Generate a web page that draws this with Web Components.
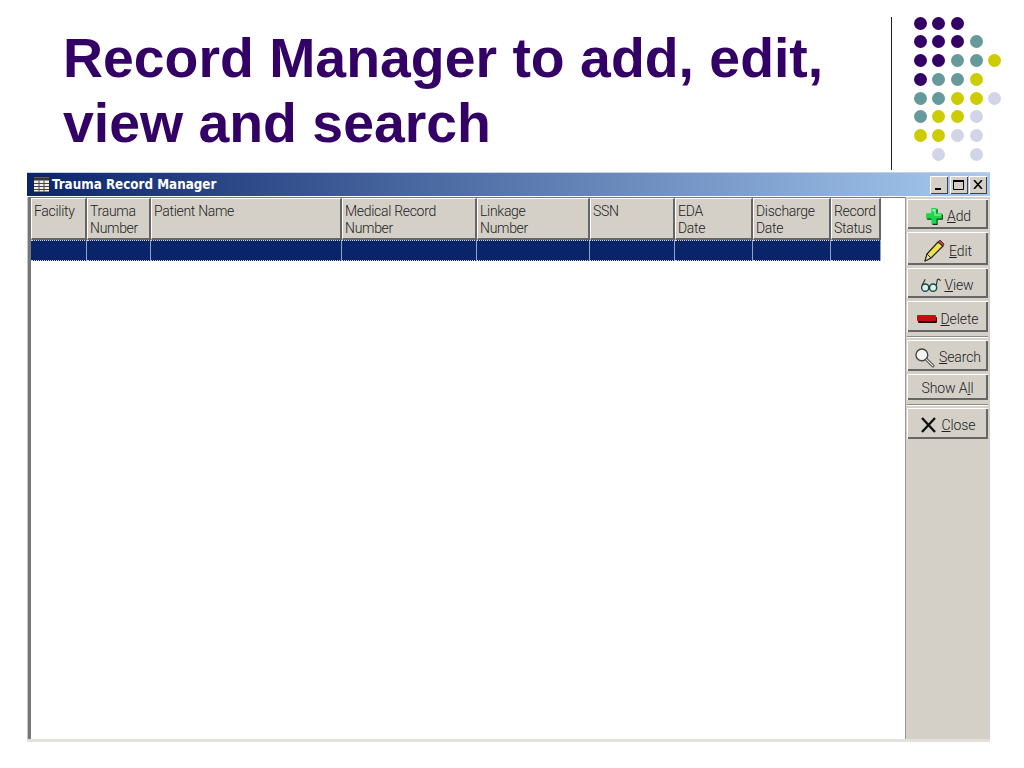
<!DOCTYPE html>
<html>
<head>
<meta charset="utf-8">
<title>Record Manager</title>
<style>
  html, body { margin: 0; background: #fff; }
  body { width: 1024px; height: 768px; overflow: hidden; font-family: "Liberation Sans", Arial, sans-serif; }
  svg { display: block; }
</style>
</head>
<body>
<slide-page>
  <slide-header slot="header">Record Manager to add, edit,<br>view and search</slide-header>
  <app-window caption="Trauma Record Manager">
    <record-grid></record-grid>
    <tool-bar slot="side">
      <tool-button h="30" gap="2" pt="4">
        <svg slot="icon" width="21" height="21" viewBox="0 0 20 20"><path d="M8 3h5v5h5v5h-5v5H8v-5H3V8h5z" fill="#0a3a12"/><path d="M7 2h5v5h5v5h-5v5H7v-5H2V7h5z" fill="#16d848"/><path d="M8 3h3v5h5v1h-6V5H8z" fill="#a8f8b8"/></svg>
        <span><u>A</u>dd</span>
      </tool-button>
      <tool-button h="33" gap="4" pt="4">
        <svg slot="icon" width="22" height="24" viewBox="0 0 22 24"><path d="M2 22l2-7L15 3l5 4L8 19z" fill="#f2e24a" stroke="#222" stroke-width="1.2" stroke-linejoin="round"/><path d="M15 3l2-2 4 4-1 2z" fill="#d83a3a" stroke="#222" stroke-width=".8"/><path d="M2 22l2-7 4 4z" fill="#e8d8b0" stroke="#222" stroke-width="1"/></svg>
        <span><u>E</u>dit</span>
      </tool-button>
      <tool-button h="30" gap="3" pt="4">
        <svg slot="icon" width="20" height="16" viewBox="0 0 19 15"><circle cx="4" cy="10" r="3.4" fill="#d8f0ee" stroke="#1d4a44" stroke-width="1.4"/><circle cx="11.5" cy="10" r="3.4" fill="#d8f0ee" stroke="#1d4a44" stroke-width="1.4"/><path d="M7.300 9q.5-1 .900 0M1 8L4 2M14.500 8L15.500 2.500q1.500-1.500 3 1" fill="none" stroke="#333" stroke-width="1.100"/></svg>
        <span><u>V</u>iew</span>
      </tool-button>
      <tool-button h="31" gap="4" pt="4">
        <svg slot="icon" width="20" height="8" viewBox="0 0 20 8"><rect x="1" y="2" width="19" height="6" rx="1" fill="#2b0606"/><rect y="0" width="19" height="6" rx="1" fill="#c80c10"/></svg>
        <span><u>D</u>elete</span>
      </tool-button>
      <tool-sep></tool-sep>
      <tool-button h="31" gap="4" pt="3">
        <svg slot="icon" width="21" height="21" viewBox="0 0 20 20"><circle cx="7.500" cy="7.500" r="5.600" fill="#f4f4f0" stroke="#444" stroke-width="1.300"/><path d="M12 12l6 6" stroke="#555" stroke-width="3" stroke-linecap="round"/><path d="M12 12l6 6" stroke="#eee" stroke-width="1" stroke-linecap="round"/></svg>
        <span><u>S</u>earch</span>
      </tool-button>
      <tool-button h="26" gap="0" pt="2"><span>Show A<u>l</u>l</span></tool-button>
      <tool-sep></tool-sep>
      <tool-button h="31" gap="5" pt="3">
        <svg slot="icon" width="17" height="16" viewBox="0 0 17 16"><path d="M2 1l13 14M15 1L2 15" stroke="#111" stroke-width="2.400"/></svg>
        <span><u>C</u>lose</span>
      </tool-button>
    </tool-bar>
  </app-window>
</slide-page>

<script>
class SlidePage extends HTMLElement {
  constructor() {
    super();
    this.attachShadow({ mode: "open" }).innerHTML = `
      <style>
        :host { display: flex; flex-direction: column; width: 1024px; height: 768px; }
        .win { display: block; margin-left: 27px; }
      </style>
      <slot name="header"></slot>
      <div class="win"><slot></slot></div>
    `;
  }
}

class SlideHeader extends HTMLElement {
  constructor() {
    super();
    this.attachShadow({ mode: "open" }).innerHTML = `
      <style>
        :host { display: flex; height: 172px; box-sizing: border-box; }
        h1 {
          margin: 0; padding: 26px 0 0 63px; width: 891px; box-sizing: border-box;
          font: bold 55.4px/65px "Liberation Sans", Arial, sans-serif; color: #330066;
          white-space: nowrap;
        }
        .rule { width: 1px; margin-top: 17px; background: #222; height: 153px; }
        dot-matrix { margin: 16.500px 0 0 21.500px; }
      </style>
      <h1><slot></slot></h1>
      <div class="rule"></div>
      <dot-matrix></dot-matrix>
    `;
  }
}

const DOT_ROWS = [
  "ppp..",
  "pppt.",
  "pptty",
  "ptty.",
  "ttyyl",
  "tyyl.",
  "yyll.",
  ".l.l."
];
const DOT_COLOURS = { p: "#330066", t: "#669999", y: "#cccc00", l: "#d4d4e8" };

class DotMatrix extends HTMLElement {
  constructor() {
    super();
    const cells = DOT_ROWS.join("").split("").map(c =>
      c === "." ? "<i></i>" : `<b style="background:${DOT_COLOURS[c]}"></b>`
    ).join("");
    this.attachShadow({ mode: "open" }).innerHTML = `
      <style>
        :host { display: block; }
        .m { display: grid; grid-template-columns: repeat(5, 13px); grid-auto-rows: 13px; column-gap: 5.7px; row-gap: 5.8px; }
        b { display: block; border-radius: 50%; }
      </style>
      <div class="m">${cells}</div>
    `;
  }
}

class AppWindow extends HTMLElement {
  constructor() {
    super();
    this.attachShadow({ mode: "open" }).innerHTML = `
      <style>
        :host { display: block; width: 963px; height: 570px; box-sizing: border-box; }
        .frame { display: flex; flex-direction: column; height: 100%; box-sizing: border-box; border-bottom: 3px solid #e4e1da; }
        .bar {
          display: flex; align-items: center; height: 24px; flex: none; padding: 0 3px 0 6px;
          background: linear-gradient(90deg, #0a246a, #a6caf0);
          border-top: 1px solid #c9cfdc; box-sizing: border-box;
        }
        .bar span { font: bold 13.300px "DejaVu Sans", sans-serif; font-stretch: condensed; color: #fff; margin-left: 2px; }
        .ctl { margin-left: auto; display: flex; }
        .ctl b {
          width: 18px; height: 18px; margin-left: 1.500px; background: #d4d0c8; display: flex; align-items: center; justify-content: center;
          box-shadow: inset 1px 1px #fff, inset -1px -1px #404040;
        }
        .body { flex: 1; display: flex; min-height: 0; background: #fff; border-top: 1px solid #fff; }
        .main { flex: 1; min-width: 0; box-sizing: border-box; border-left: 3px solid #777; box-shadow: -1px 0 #c4c4c4; margin-left: 1px; border-top: 1px solid #777; }
        .side { width: 85px; flex: none; background: #d4d0c8; box-sizing: border-box; border-left: 1px solid #999; }
      </style>
      <div class="frame">
        <div class="bar">
          <svg width="17" height="17" viewBox="0 0 17 16">
            <rect x=".5" y=".5" width="16" height="15" fill="#f4f0e0" stroke="#223"/>
            <rect x="1" y="1" width="15" height="3" fill="#334"/>
            <path d="M1 7h15M1 10h15M1 13h15M6 4v11M11 4v11" stroke="#445" stroke-width="1"/>
          </svg>
          <span></span>
          <div class="ctl">
            <b><svg width="10" height="10" viewBox="0 0 10 10"><rect x="1" y="8" width="6" height="2" fill="#000"/></svg></b>
            <b><svg width="11" height="10" viewBox="0 0 11 10"><path d="M.5 1.500h10v8H.5z" fill="none" stroke="#000"/><rect width="11" height="2" fill="#000"/></svg></b>
            <b><svg width="10" height="9" viewBox="0 0 10 9"><path d="M1 0l8 9M9 0L1 9" stroke="#000" stroke-width="1.600"/></svg></b>
          </div>
        </div>
        <div class="body">
          <div class="main"><slot></slot></div>
          <div class="side"><slot name="side"></slot></div>
        </div>
      </div>
    `;
    this.shadowRoot.querySelector("span").textContent = this.getAttribute("caption");
  }
}

const COLUMNS = [
  ["Facility", 56], ["Trauma<br>Number", 64], ["Patient Name", 191],
  ["Medical Record<br>Number", 135], ["Linkage<br>Number", 113], ["SSN", 85],
  ["EDA<br>Date", 78], ["Discharge<br>Date", 78], ["Record<br>Status", 50]
];

class RecordGrid extends HTMLElement {
  constructor() {
    super();
    const tracks = COLUMNS.map(c => c[1] + "px").join(" ");
    const heads = COLUMNS.map(c => `<div class="h">${c[0]}</div>`).join("");
    const cells = COLUMNS.map(() => `<div class="c"></div>`).join("");
    this.attachShadow({ mode: "open" }).innerHTML = `
      <style>
        :host { display: block; }
        .g { display: grid; grid-template-columns: ${tracks}; grid-template-rows: 42px 21px; width: max-content; }
        .h {
          background: #d4d0c8; box-sizing: border-box; padding: 4px 0 0 2px;
          font: 14px/16.500px Roboto, "Liberation Sans", Arial, sans-serif; font-weight: 300; color: #222; white-space: nowrap; overflow: hidden;
          border: 1px solid #fff; border-right-color: #666; border-bottom-color: #666;
          border-right-width: 2px; border-bottom-width: 2px; letter-spacing: -.3px;
        }
        .c {
          background: #0a246a; box-sizing: border-box;
          border-top: 1px dotted #ddd; border-bottom: 1px dotted #ddd; border-right: 1px solid #8fa2c8;
        }
      </style>
      <div class="g">${heads}${cells}</div>
    `;
  }
}

class ToolBar extends HTMLElement {
  constructor() {
    super();
    this.attachShadow({ mode: "open" }).innerHTML = `
      <style>
        :host { display: flex; flex-direction: column; padding: 2px 2px 0 1px; gap: 3px; box-sizing: border-box; }
      </style>
      <slot></slot>
    `;
  }
}

class ToolButton extends HTMLElement {
  constructor() {
    super();
    this.attachShadow({ mode: "open" }).innerHTML = `
      <style>
        :host { display: block; }
        .b {
          display: flex; align-items: center; justify-content: center; box-sizing: border-box;
          background: #d4d0c8; color: #222; font: 300 14px Roboto, "Liberation Sans", Arial, sans-serif;
          box-shadow: inset 1px 1px #fff, inset -2px -2px #666; letter-spacing: -.1px;
        }
      </style>
      <div class="b"><slot name="icon"></slot><slot></slot></div>
    `;
    const b = this.shadowRoot.querySelector(".b");
    b.style.height = this.getAttribute("h") + "px";
    b.style.gap = this.getAttribute("gap") + "px";
    b.style.paddingTop = this.getAttribute("pt") + "px";
  }
}

class ToolSep extends HTMLElement {
  constructor() {
    super();
    this.attachShadow({ mode: "open" }).innerHTML = `
      <style>
        :host { display: block; box-sizing: border-box; height: 2px; margin: 1px 0 -1px; background: #8c8a84; border-bottom: 1px solid #fff; }
      </style>
    `;
  }
}

customElements.define("slide-page", SlidePage);
customElements.define("slide-header", SlideHeader);
customElements.define("dot-matrix", DotMatrix);
customElements.define("app-window", AppWindow);
customElements.define("record-grid", RecordGrid);
customElements.define("tool-bar", ToolBar);
customElements.define("tool-button", ToolButton);
customElements.define("tool-sep", ToolSep);
</script>
</body>
</html>
